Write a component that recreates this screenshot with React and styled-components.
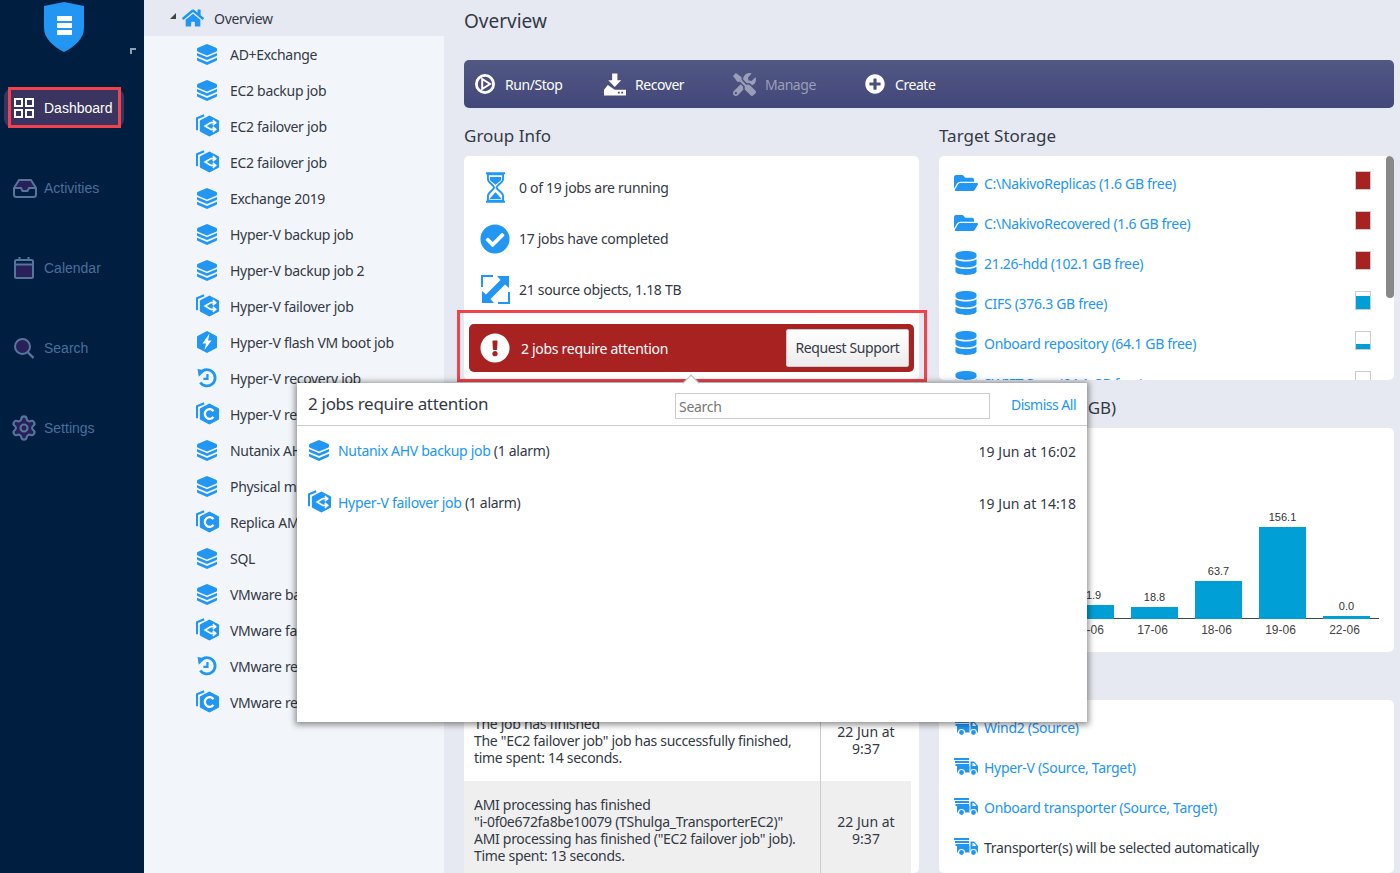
import React from "react";
import styled, { createGlobalStyle } from "styled-components";
import { FaHome, FaCheckCircle, FaFolderOpen, FaDatabase, FaPlusCircle, FaTools, FaExclamationCircle } from "react-icons/fa";
import { Settings } from "lucide-react";

const BLUE = "#2196f3";
const TEXT = "#333a45";
const NAVSTROKE = "#55759c";
const NAVFILL = "#2a2059";

const Global = createGlobalStyle`
  html, body { margin: 0; padding: 0; height: 873px; overflow: hidden; background: #e6e9f1; }
  * { box-sizing: border-box; }
  body { font-family: "Noto Sans", "Liberation Sans", sans-serif; font-size: 14px; letter-spacing: -0.3px; color: ${TEXT}; }
`;

const Page = styled.div`
  position: relative; display: flex; width: 1400px; height: 873px; overflow: hidden;
`;
const Sidebar = styled.nav`
  position: relative; flex: 0 0 144px; background: #001e40;
  font-family: "Liberation Sans", sans-serif; letter-spacing: 0; padding-top: 2px;
`;
const LogoWrap = styled.div`
  display: flex; justify-content: flex-start; padding-left: 44px; height: 50px; margin-bottom: 36px;
`;
const CornerMark = styled.span`
  position: absolute; left: 130px; top: 48px; width: 6px; height: 6px;
  border-left: 2px solid #8fa0b5; border-top: 2px solid #8fa0b5;
`;
const NavItem = styled.div`
  position: relative; display: flex; align-items: center; gap: 10px;
  width: 120px; height: 40px; margin: 0 20px 40px 4px; padding-left: 10px; border-radius: 9px;
  background: ${p => (p.$active ? "#3a3560" : "transparent")};
  color: ${p => (p.$active ? "#fff" : "#4b6e9c")};
  ${p => p.$active && `&::after { content: ""; position: absolute; left: 4px; right: 3px; top: -1px; bottom: 0; border: 3px solid #f2434b; }`}
`;
const GearWrap = styled.span`
  display: inline-flex; margin: 0 -4px;
`;
const TraySvg = styled.svg` margin: 0 -3px 0 -1px; `;
const Tree = styled.aside`
  flex: 0 0 300px; background: #f2f5fa;
`;
const TreeHead = styled.div`
  display: flex; align-items: center; height: 36px; padding-left: 26px; background: #e6e9f1;
`;
const Caret = styled.span`
  width: 0; height: 0; margin: -4px 6px 0 0;
  border-bottom: 6px solid #444; border-left: 6px solid transparent;
`;
const TreeHeadLabel = styled.span` margin-left: 10px; `;
const TreeRow = styled.div`
  display: flex; align-items: center; gap: 10px; height: 36px; padding-left: 52px; white-space: nowrap;
`;
const Slot = styled.span`
  display: inline-flex; align-items: center; justify-content: center; flex: 0 0 ${p => p.$w || 24}px; color: ${BLUE};
`;
const Main = styled.main`
  flex: 1; padding: 0 6px 0 20px; min-width: 0;
`;
const PageTitle = styled.h1`
  margin: 0; height: 60px; padding-top: 6px; font-size: 19px; letter-spacing: 0; line-height: 30px; font-weight: 400;
`;
const Toolbar = styled.div`
  display: flex; align-items: center; height: 48px; padding-left: 11px; border-radius: 5px;
  background: linear-gradient(#525883, #42477a); color: #fff; letter-spacing: -0.45px;
`;
const ToolItem = styled.div`
  display: flex; align-items: center; gap: ${p => p.$gap || 10}px; flex: 0 0 ${p => p.$w || 129}px;
  color: ${p => (p.$disabled ? "#9a9eb8" : "#fff")};
`;
const Columns = styled.div`
  display: grid; grid-template-columns: 455px 455px; column-gap: 20px;
`;
const Column = styled.div` display: flex; flex-direction: column; `;
const Heading = styled.h2`
  margin: 0; height: 48px; padding-top: 6px; display: flex; align-items: center; font-size: 17px; letter-spacing: 0; font-weight: 400; white-space: pre;
`;
const Card = styled.section`
  position: relative; height: ${p => p.$h}px; background: #fff; border-radius: 5px;
`;
const ClipCard = styled(Card)` overflow: hidden; padding-top: 7px; `;
const ScrollThumb = styled.div`
  position: absolute; top: 0; right: 0; width: 8px; height: 142px; background: #888; border-radius: 4px;
`;
const GroupCard = styled(Card)` padding: 6px 5px 0; `;
const InfoRow = styled.div`
  display: flex; align-items: center; gap: 9px; height: 51px; padding-left: 11px;
`;
const AttentionBar = styled.div`
  position: relative; display: flex; align-items: center; justify-content: space-between;
  height: 48px; margin-top: 9px; padding: 0 5px 0 11px; border-radius: 5px; background: #a82222; color: #fff;
  &::after {
    content: ""; position: absolute; left: -12px; right: -13px; top: -14px; bottom: -10px;
    border: 3px solid #f2434b; pointer-events: none;
  }
`;
const AttentionLabel = styled.div` display: flex; align-items: center; gap: 11px; `;
const SupportButton = styled.button`
  position: relative; z-index: 1; width: 123px; height: 38px; padding: 0 0 2px; border: 1px solid #ccc; border-radius: 2px;
  background: linear-gradient(#fff, #ececec); font: inherit; letter-spacing: -0.4px; color: ${TEXT};
`;
const ListRow = styled.div`
  display: flex; align-items: center; gap: 6px; height: 40px; padding: 0 23px 0 15px; white-space: nowrap;
`;
const Link = styled.span` color: ${BLUE}; `;
const Grow = styled.span` flex: 1; `;
const Level = styled.span`
  display: flex; align-items: flex-end; width: 16px; height: 19px; margin-top: -6px; border: 1px solid #ccc; background: #fff;
`;
const LevelFill = styled.span`
  display: block; width: 100%; background: ${p => p.$c};
`;
const THead = styled.div` height: 29px; `;
const LogRow = styled.div`
  display: grid; grid-template-columns: 356px 91px; width: 447px;
  background: ${p => (p.$alt ? "#efefef" : "#fff")}; line-height: 17px;
`;
const LogText = styled.div` padding: 15px 0 15px 10px; white-space: nowrap; `;
const LogTime = styled.div`
  display: flex; align-items: center; justify-content: center; text-align: center; border-left: 1px solid #ccc; padding-bottom: 1px; letter-spacing: 0;
`;
const Modal = styled.div`
  position: absolute; left: 297px; top: 383px; width: 790px; height: 339px; background: #fff; z-index: 5;
  box-shadow: 0 1px 6px 2px rgba(0,0,0,.42);
  &::before {
    content: ""; position: absolute; left: 388px; top: -6px; width: 11px; height: 11px; background: #fff;
    border-left: 1px solid #bbb; border-top: 1px solid #bbb; transform: rotate(45deg);
  }
`;
const ModalHead = styled.div`
  position: relative; display: flex; align-items: center; height: 43px; padding: 0 11px; border-bottom: 1px solid #ccc;
`;
const ModalTitle = styled.div` flex: 0 0 367px; padding-bottom: 2px; font-size: 17px; `;
const SearchBox = styled.input`
  flex: 0 0 315px; height: 26px; margin-top: 4px; padding: 0 3px; border: 1px solid #ccc; font: inherit; letter-spacing: inherit; outline: none;
  &::placeholder { color: #777; opacity: 1; }
`;
const Dismiss = styled.span` margin-left: auto; color: ${BLUE}; letter-spacing: -0.5px; `;
const ModalList = styled.div` margin-top: -2px; `;
const ModalRow = styled.div`
  display: flex; align-items: center; gap: 6px; height: 52px; padding: 0 11px;
`;
const ModalTime = styled.span` margin-left: auto; padding-top: 2px; letter-spacing: 0.05px; `;
const ShiftedSvg = styled.svg` margin-right: 2px; `;
const ChartCard = styled(Card)` overflow: hidden; & > svg { display: block; } `;

const Layers = () => (
  <ShiftedSvg width="20" height="21" viewBox="0 0 20 21" fill={BLUE}>
    <path d="M10 0 L19 3.7 Q20 4.2 20 5 V6.6 Q20 7.3 19 7.8 L10 11.4 L1 7.8 Q0 7.3 0 6.6 V5 Q0 4.2 1 3.7 Z" />
    <path d="M0 9 L10 13.2 L20 9 V11 Q20 11.8 19 12.2 L10 16 L1 12.2 Q0 11.8 0 11 Z" />
    <path d="M0 13.8 L10 18 L20 13.8 V15.8 Q20 16.6 19 17 L10 21 L1 17 Q0 16.6 0 15.8 Z" />
  </ShiftedSvg>
);
const hex = "M14 1 L23.5 6 Q24 6.3 24 7 V17 Q24 17.7 23.5 18 L14 23 L4.5 18 Q4 17.7 4 17 V7 Q4 6.3 4.5 6 Z";
const Back = () => <path d="M8.5 0.8 L1 4 V16.5" fill="none" stroke={BLUE} strokeWidth="2.2" />;
const Failover = () => (
  <svg width="24" height="24" viewBox="0 0 25 24">
    <Back />
    <path d={hex} fill={BLUE} />
    <path d="M20 8.5 H15.5 L9.5 12 L15.5 15.5 H20 M17.5 6 L20.5 8.5 L17.5 11 M17.5 13 L20.5 15.5 L17.5 18" fill="none" stroke="#fff" strokeWidth="1.7" />
  </svg>
);
const HexC = () => (
  <svg width="24" height="24" viewBox="0 0 25 24">
    <Back />
    <path d={hex} fill={BLUE} />
    <path d="M18.2 9 A5 5 0 1 0 18.2 15" fill="none" stroke="#fff" strokeWidth="2.4" />
  </svg>
);
const Flash = () => (
  <ShiftedSvg width="20" height="22" viewBox="4 1 20 22">
    <path d={hex} fill={BLUE} />
    <path d="M16.5 3.5 L9.5 13.5 H13 L11.5 20 L18.5 10.5 H15 Z" fill="#fff" />
  </ShiftedSvg>
);
const Recovery = () => (
  <ShiftedSvg width="20" height="20" viewBox="0 0 22 22" fill="none" stroke={BLUE}>
    <path d="M4 5 A9 9 0 1 1 3.6 16" strokeWidth="3" />
    <path d="M0.5 1 L9 2.5 L2 9.5 Z" fill={BLUE} strokeWidth="0" />
    <path d="M11.5 6.5 V12 H7" strokeWidth="2.4" />
  </ShiftedSvg>
);
const Shield = () => (
  <svg width="40" height="50" viewBox="0 0 40 50">
    <path d="M20 0 L40 4 V26 C40 37 30 45 20 50 C10 45 0 37 0 26 V4 Z" fill={BLUE} />
    <path d="M13 14 H28 V19 H13 Z M13 21 H28 V26 H13 Z M13 28 H28 V33 H13 Z" fill="#fff" />
  </svg>
);
const Grid4 = () => (
  <svg width="20" height="20" viewBox="0 0 20 20" fill="none" stroke="#fff" strokeWidth="2">
    <rect x="1" y="1" width="7" height="7" /><rect x="12" y="1" width="7" height="7" />
    <rect x="1" y="12" width="7" height="7" /><rect x="12" y="12" width="7" height="7" />
  </svg>
);
const TrayIcon = () => (
  <TraySvg width="24" height="19" viewBox="0 0 24 19" fill="none" stroke={NAVSTROKE} strokeWidth="2">
    <path d="M6 1 H18 L22 9 H16 L14.5 12 H9.5 L8 9 H2 Z" fill={NAVFILL} strokeWidth="0" />
    <path d="M6 1 H18 L23 9 V15.5 Q23 18 20.5 18 H3.5 Q1 18 1 15.5 V9 Z" strokeLinejoin="round" />
    <path d="M1 9 H8 L9.5 12 H14.5 L16 9 H23" />
  </TraySvg>
);
const CalendarIcon = () => (
  <svg width="20" height="22" viewBox="0 0 20 22" fill="none" stroke={NAVSTROKE} strokeWidth="2">
    <rect x="1" y="3" width="18" height="18" rx="1.5" />
    <rect x="2" y="8" width="16" height="12" fill={NAVFILL} strokeWidth="0" />
    <path d="M1 7.5 H19 M5.5 0 V4 M14.5 0 V4" />
  </svg>
);
const SearchIcon = () => (
  <svg width="20" height="21" viewBox="0 0 20 21" fill="none" stroke={NAVSTROKE}>
    <circle cx="8.5" cy="8.5" r="7.5" fill={NAVFILL} strokeWidth="2" />
    <path d="M14 14.5 L19.5 20" strokeWidth="2.4" />
  </svg>
);
const Hourglass = () => (
  <svg width="19" height="31" viewBox="1 0 20 32">
    <path d="M1 1 H21 M1 31 H21" stroke={BLUE} strokeWidth="2" />
    <path d="M3 2 V7 C3 11 9 13 9.5 16 C9 19 3 21 3 25 V30 H19 V25 C19 21 12.5 19 12 16 C12.5 13 19 11 19 7 V2 Z" fill="#fff" stroke={BLUE} strokeWidth="2" />
    <path d="M5 5 H17 V7 C17 9 13.5 11 11 13 C8.5 11 5 9 5 7 Z M11 21 L17.5 28 H4.5 Z" fill={BLUE} />
  </svg>
);
const Expand = () => (
  <svg width="29" height="29" viewBox="0 0 29 29">
    <path d="M1 12 V1 H12 M17 28 H28 V17" fill="none" stroke={BLUE} strokeWidth="2" />
    <path d="M16 1 H28 V13 L24 9.5 L9.5 24 L13 28 H1 V16 L5 19.5 L19.5 5 Z" fill={BLUE} />
  </svg>
);
const PlayRing = () => (
  <svg width="20" height="20" viewBox="0 0 20 20" fill="none" stroke="#fff">
    <circle cx="10" cy="10" r="8.6" strokeWidth="2.8" />
    <path d="M7.2 5 L15 10 L7.2 15 Z" strokeWidth="2" />
  </svg>
);
const RecoverIcon = () => (
  <svg width="22" height="23" viewBox="0 0 23 23" fill="#fff">
    <path d="M8.5 0 H14 V7 H18 L11.2 14 L4.5 7 H8.5 Z" />
    <path d="M0 17 L4 12 L11.2 17 H22 L23 17 V23 H0 Z" />
    <path d="M18 19 h2 v2 h-2 Z M14.5 19 h2 v2 h-2 Z" fill="#454b7b" />
  </svg>
);
const Truck = () => (
  <svg width="24" height="18" viewBox="0 0 24 18" fill={BLUE}>
    <path d="M0 0 H15 V2 H0 Z M1 3 H15 V5 H1 Z M1.5 6 H15 V8 H1.5 Z M3 8 H15.5 V14.5 H3 Z" />
    <path d="M16.5 3.5 H20 L24 8 V14.5 H16.5 Z" />
    <path d="M18.5 5 H20 L22.3 8 H18.5 Z" fill="#fff" />
    <circle cx="7.5" cy="14.5" r="3" stroke="#fff" strokeWidth="1.2" />
    <circle cx="19.5" cy="14.5" r="3" stroke="#fff" strokeWidth="1.2" />
  </svg>
);

const rowIcons = { layers: <Layers />, failover: <Failover />, hexc: <HexC />, flash: <Flash />, recovery: <Recovery /> };
const treeRows = [
  ["layers", "AD+Exchange"], ["layers", "EC2 backup job"], ["failover", "EC2 failover job"], ["failover", "EC2 failover job"],
  ["layers", "Exchange 2019"], ["layers", "Hyper-V backup job"], ["layers", "Hyper-V backup job 2"], ["failover", "Hyper-V failover job"],
  ["flash", "Hyper-V flash VM boot job"], ["recovery", "Hyper-V recovery job"], ["hexc", "Hyper-V replication job"],
  ["layers", "Nutanix AHV backup job"], ["layers", "Physical machine backup"], ["hexc", "Replica AMI job"], ["layers", "SQL"],
  ["layers", "VMware backup job"], ["failover", "VMware failover job"], ["recovery", "VMware recovery job"], ["hexc", "VMware replication job"],
];
const storage = [
  [<FaFolderOpen size={24} />, "C:\\NakivoReplicas (1.6 GB free)", 100, "#a82222"],
  [<FaFolderOpen size={24} />, "C:\\NakivoRecovered (1.6 GB free)", 100, "#a82222"],
  [<FaDatabase size={24} />, "21.26-hdd (102.1 GB free)", 100, "#a82222"],
  [<FaDatabase size={24} />, "CIFS (376.3 GB free)", 76, "#00a0d6"],
  [<FaDatabase size={24} />, "Onboard repository (64.1 GB free)", 25, "#00a0d6"],
  [<FaDatabase size={24} />, "SWIFT Sync (64.1 GB free)", 0, "#00a0d6"],
];
const chart = [
  [0, 12, "21.5", "14-06"], [64, 9, "15.2", "15-06"], [128, 14, "21.9", "16-06"],
  [192, 12, "18.8", "17-06"], [256, 38, "63.7", "18-06"], [320, 92, "156.1", "19-06"], [384, 3, "0.0", "22-06"],
];
const Chart = () => (
  <svg width="455" height="224" viewBox="0 0 455 224" fontFamily="Liberation Sans, sans-serif" letterSpacing="0">
    <line x1="0" x2="440" y1="190.5" y2="190.5" stroke="#444" />
    {chart.map(([x, h, v, d]) => (
      <g key={d}>
        <rect x={x} y={191 - h} width="47" height={h} fill="#00a0d6" />
        <text x={x + 23.5} y={191 - h - 6} fontSize="11" fill="#333" textAnchor="middle">{v}</text>
        <text x={x + 21.5} y="206" fontSize="12" fill="#444" textAnchor="middle">{d}</text>
      </g>
    ))}
  </svg>
);

export default function App() {
  return (
    <Page>
      <Global />
      <Sidebar>
        <LogoWrap><Shield /></LogoWrap>
        <CornerMark />
        <NavItem $active><Grid4 />Dashboard</NavItem>
        <NavItem><TrayIcon />Activities</NavItem>
        <NavItem><CalendarIcon />Calendar</NavItem>
        <NavItem><SearchIcon />Search</NavItem>
        <NavItem><GearWrap><Settings size={28} color={NAVSTROKE} fill={NAVFILL} strokeWidth={1.8} /></GearWrap>Settings</NavItem>
      </Sidebar>
      <Tree>
        <TreeHead><Caret /><FaHome size={22} color={BLUE} /><TreeHeadLabel>Overview</TreeHeadLabel></TreeHead>
        {treeRows.map(([ic, t], i) => (
          <TreeRow key={i}><Slot>{rowIcons[ic]}</Slot>{t}</TreeRow>
        ))}
      </Tree>
      <Main>
        <PageTitle>Overview</PageTitle>
        <Toolbar>
          <ToolItem><PlayRing />Run/Stop</ToolItem>
          <ToolItem $gap={9}><RecoverIcon />Recover</ToolItem>
          <ToolItem $gap={9} $w={132} $disabled><FaTools size={23} />Manage</ToolItem>
          <ToolItem><FaPlusCircle size={20} />Create</ToolItem>
        </Toolbar>
        <Columns>
          <Column>
            <Heading>Group Info</Heading>
            <GroupCard $h={224}>
              <InfoRow><Slot $w={30}><Hourglass /></Slot>0 of 19 jobs are running</InfoRow>
              <InfoRow><Slot $w={30}><FaCheckCircle size={30} /></Slot>17 jobs have completed</InfoRow>
              <InfoRow><Slot $w={30}><Expand /></Slot>21 source objects, 1.18 TB</InfoRow>
              <AttentionBar>
                <AttentionLabel><FaExclamationCircle size={30} color="#fff" />2 jobs require attention</AttentionLabel>
                <SupportButton>Request Support</SupportButton>
              </AttentionBar>
            </GroupCard>
            <Heading>Events</Heading>
            <Card $h={445}>
              <THead />
              <LogRow $alt><LogText>Job has started<br />The "SQL" job has started.<br />Time spent: 2 seconds.</LogText><LogTime>22 Jun at<br />9:40</LogTime></LogRow>
              <LogRow><LogText>The job has finished<br />The "VMware backup job" has finished,<br />time spent: 18 seconds.</LogText><LogTime>22 Jun at<br />9:38</LogTime></LogRow>
              <LogRow $alt><LogText>The job has started<br />The "EC2 failover job" job has started,<br />time spent: 1 second.</LogText><LogTime>22 Jun at<br />9:37</LogTime></LogRow>
              <LogRow><LogText>The job has finished<br />The "EC2 failover job" job has successfully finished,<br />time spent: 14 seconds.</LogText><LogTime>22 Jun at<br />9:37</LogTime></LogRow>
              <LogRow $alt><LogText>AMI processing has finished<br />"i-0f0e672fa8be10079 (TShulga_TransporterEC2)"<br />AMI processing has finished ("EC2 failover job" job).<br />Time spent: 13 seconds.</LogText><LogTime>22 Jun at<br />9:37</LogTime></LogRow>
            </Card>
          </Column>
          <Column>
            <Heading>Target Storage</Heading>
            <ClipCard $h={224}>
              {storage.map(([ic, t, lvl, c], i) => (
                <ListRow key={i}>
                  <Slot>{ic}</Slot><Link>{t}</Link><Grow />
                  <Level><LevelFill $c={c} style={{ height: `${lvl}%` }} /></Level>
                </ListRow>
              ))}
              <ScrollThumb />
            </ClipCard>
            <Heading>{"Data Transferred  (GB)"}</Heading>
            <ChartCard $h={224}><Chart /></ChartCard>
            <Heading>Transporters</Heading>
            <ClipCard $h={173}>
              <ListRow><Slot><Truck /></Slot><Link>Wind2 (Source)</Link></ListRow>
              <ListRow><Slot><Truck /></Slot><Link>Hyper-V (Source, Target)</Link></ListRow>
              <ListRow><Slot><Truck /></Slot><Link>Onboard transporter (Source, Target)</Link></ListRow>
              <ListRow><Slot><Truck /></Slot>Transporter(s) will be selected automatically</ListRow>
            </ClipCard>
          </Column>
        </Columns>
      </Main>
      <Modal>
        <ModalHead>
          <ModalTitle>2 jobs require attention</ModalTitle>
          <SearchBox placeholder="Search" />
          <Dismiss>Dismiss All</Dismiss>
        </ModalHead>
        <ModalList>
          <ModalRow>
            <Slot $w={24}><Layers /></Slot>
            <span><Link>Nutanix AHV backup job</Link> (1 alarm)</span>
            <ModalTime>19 Jun at 16:02</ModalTime>
          </ModalRow>
          <ModalRow>
            <Slot $w={24}><Failover /></Slot>
            <span><Link>Hyper-V failover job</Link> (1 alarm)</span>
            <ModalTime>19 Jun at 14:18</ModalTime>
          </ModalRow>
        </ModalList>
      </Modal>
    </Page>
  );
}
